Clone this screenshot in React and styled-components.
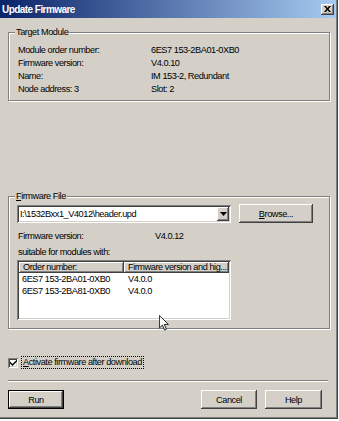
import React from "react";
import styled, { createGlobalStyle } from "styled-components";

const GlobalStyle = createGlobalStyle`
  html, body {
    margin: 0;
    padding: 0;
    background: #ffffff;
  }
  body {
    font-family: "Liberation Sans", Arial, sans-serif;
    font-size: 9.2px;
    letter-spacing: -0.45px;
    color: #000;
  }
`;

const raised = `
  background: #d4d0c8;
  box-shadow: inset -1px -1px #404040, inset 1px 1px #ffffff,
    inset -2px -2px #808080, inset 2px 2px #d4d0c8;
`;

const sunken = `
  background: #ffffff;
  box-shadow: inset 1px 1px #808080, inset -1px -1px #ffffff,
    inset 2px 2px #404040, inset -2px -2px #d4d0c8;
`;

const Window = styled.div`
  position: relative;
  width: 338px;
  height: 419px;
  box-sizing: border-box;
  padding: 0 2px 3px 0;
  background: #d4d0c8;
  box-shadow: inset -1px -1px #404040, inset -2px -2px #808080;
  display: flex;
  flex-direction: column;
`;

const TitleBar = styled.div`
  height: 18px;
  display: flex;
  align-items: center;
  justify-content: space-between;
  padding: 0 2px;
  background: linear-gradient(to right, #0a246a, #a6caf0);
`;

const TitleText = styled.span`
  color: #fff;
  font-weight: bold;
  font-size: 10px;
  letter-spacing: -0.55px;
`;

const CloseButton = styled.div`
  ${raised}
  width: 13px;
  height: 11px;
  display: flex;
  align-items: center;
  justify-content: center;
`;

const Body = styled.div`
  flex: 1;
  display: flex;
  flex-direction: column;
  padding: 9px 6px 0 8px;
`;

const GroupBox = styled.fieldset`
  margin: ${(p) => p.$top || 0}px 0 0 0;
  padding: ${(p) => p.$pad};
  border: 1px solid #808080;
  box-shadow: 1px 1px 0 #fff, inset 1px 1px 0 #fff;
  min-width: 0;
`;

const Legend = styled.legend`
  margin-left: ${(p) => p.$shift}px;
  padding: 0 1px;
  line-height: 10px;
  background: #d4d0c8;
`;

const InfoRow = styled.div`
  display: flex;
  align-items: center;
  height: ${(p) => p.$height || 13}px;
  padding-left: ${(p) => p.$indent || 0}px;
  white-space: nowrap;
`;

const InfoLabel = styled.span`
  width: ${(p) => p.$width}px;
  flex: none;
`;

const FileRow = styled.div`
  display: flex;
  align-items: flex-start;
  gap: 8px;
  margin-top: 3px;
  margin-bottom: 5px;
`;

const ComboBox = styled.div`
  ${sunken}
  width: 214px;
  height: 18px;
  box-sizing: border-box;
  margin-top: 1px;
  padding: 2px;
  display: flex;
  align-items: center;
`;

const ComboText = styled.span`
  flex: 1;
  padding-left: 1px;
  white-space: nowrap;
`;

const DropButton = styled.div`
  ${raised}
  width: 12px;
  height: 14px;
  display: flex;
  align-items: center;
  justify-content: center;
`;

const PushButton = styled.div`
  ${raised}
  width: ${(p) => p.$width}px;
  height: 19px;
  box-sizing: border-box;
  display: flex;
  align-items: center;
  justify-content: center;
  ${(p) =>
    p.$default &&
    `border: 1px solid #000;
     box-shadow: inset -1px -1px #404040, inset 1px 1px #ffffff,
       inset -2px -2px #808080;`}
`;

const ListView = styled.div`
  ${sunken}
  width: 214px;
  height: 60px;
  box-sizing: border-box;
  padding: 2px;
  display: flex;
  flex-direction: column;
`;

const ListHeader = styled.div`
  display: grid;
  grid-template-columns: 105px 1fr;
  height: 11px;
`;

const HeaderCell = styled.div`
  ${raised}
  padding-left: ${(p) => p.$pad}px;
  line-height: 11px;
  white-space: nowrap;
  overflow: hidden;
`;

const ListRow = styled.div`
  display: grid;
  grid-template-columns: 105px 1fr;
  height: 12px;
  line-height: 12px;
  &:first-of-type {
    margin-top: 1px;
  }
`;

const ListCell = styled.span`
  padding-left: ${(p) => p.$pad}px;
  white-space: nowrap;
`;

const CheckRow = styled.div`
  display: flex;
  align-items: center;
  gap: 4px;
  margin-top: 28px;
`;

const CheckBox = styled.div`
  ${sunken}
  width: 10px;
  height: 10px;
  display: flex;
  align-items: center;
  justify-content: center;
`;

const CheckLabel = styled.span`
  outline: 1px dotted #000;
  padding: 0 1px;
  line-height: 11px;
`;

const Separator = styled.div`
  height: 0;
  margin: 12px 2px 0 0;
  border-top: 1px solid #808080;
  border-bottom: 1px solid #fff;
`;

const ButtonRow = styled.div`
  display: flex;
  gap: 8px;
  margin-top: 8px;
  padding-right: 8px;
`;

const Spacer = styled.div`
  flex: 1;
`;

const Cursor = styled.svg`
  position: absolute;
  left: 159px;
  top: 315px;
`;

export default function App() {
  return (
    <>
      <GlobalStyle />
      <Window>
        <TitleBar>
          <TitleText>Update Firmware</TitleText>
          <CloseButton>
            <svg width="7" height="6" viewBox="0 0 7 6">
              <path d="M0 0h2l1.5 2L5 0h2L4.5 3 7 6H5L3.5 4 2 6H0l2.5-3z" fill="#000" />
            </svg>
          </CloseButton>
        </TitleBar>
        <Body>
          <GroupBox $pad="6px 9px 5px 9px">
            <Legend $shift={-3}>Target Module</Legend>
            <InfoRow>
              <InfoLabel $width={133}>Module order number:</InfoLabel>
              <span>6ES7 153-2BA01-0XB0</span>
            </InfoRow>
            <InfoRow>
              <InfoLabel $width={133}>Firmware version:</InfoLabel>
              <span>V4.0.10</span>
            </InfoRow>
            <InfoRow>
              <InfoLabel $width={133}>Name:</InfoLabel>
              <span>IM 153-2, Redundant</span>
            </InfoRow>
            <InfoRow>
              <InfoLabel $width={133}>Node address: 3</InfoLabel>
              <span>Slot: 2</span>
            </InfoRow>
          </GroupBox>

          <GroupBox $top={90} $pad="0 8px 8px 8px">
            <Legend $shift={-2}>
              <u>F</u>irmware File
            </Legend>
            <FileRow>
              <ComboBox>
                <ComboText>I:\1532Bxx1_V4012\header.upd</ComboText>
                <DropButton>
                  <svg width="7" height="4" viewBox="0 0 7 4">
                    <path d="M0 0h7L3.5 4z" fill="#000" />
                  </svg>
                </DropButton>
              </ComboBox>
              <PushButton $width={74}>
                <span>
                  <u>B</u>rowse...
                </span>
              </PushButton>
            </FileRow>
            <InfoRow $height={16} $indent={1}>
              <InfoLabel $width={137}>Firmware version:</InfoLabel>
              <span>V4.0.12</span>
            </InfoRow>
            <InfoRow $height={16} $indent={1}>
              <InfoLabel $width={137}>suitable for modules with:</InfoLabel>
            </InfoRow>
            <ListView>
              <ListHeader>
                <HeaderCell $pad={4}>Order number:</HeaderCell>
                <HeaderCell $pad={4}>Firmware version and hig...</HeaderCell>
              </ListHeader>
              <ListRow>
                <ListCell $pad={3}>6ES7 153-2BA01-0XB0</ListCell>
                <ListCell $pad={4}>V4.0.0</ListCell>
              </ListRow>
              <ListRow>
                <ListCell $pad={3}>6ES7 153-2BA81-0XB0</ListCell>
                <ListCell $pad={4}>V4.0.0</ListCell>
              </ListRow>
            </ListView>
          </GroupBox>

          <CheckRow>
            <CheckBox>
              <svg width="7" height="7" viewBox="0 0 7 7">
                <path d="M0 2.5l2.5 2.5L7 0.5v2L2.5 7 0 4.5z" fill="#000" />
              </svg>
            </CheckBox>
            <CheckLabel>
              <u>A</u>ctivate firmware after download
            </CheckLabel>
          </CheckRow>

          <Separator />

          <ButtonRow>
            <PushButton $width={56} $default>
              Run
            </PushButton>
            <Spacer />
            <PushButton $width={56}>Cancel</PushButton>
            <PushButton $width={57}>Help</PushButton>
          </ButtonRow>
        </Body>

        <Cursor width="10" height="16" viewBox="0 0 12 19">
          <path
            d="M0.5 0.5v15l3.6-3.5 2.6 6 2.2-1-2.6-5.8h5z"
            fill="#fff"
            stroke="#000"
            strokeWidth="1"
          />
        </Cursor>
      </Window>
    </>
  );
}
